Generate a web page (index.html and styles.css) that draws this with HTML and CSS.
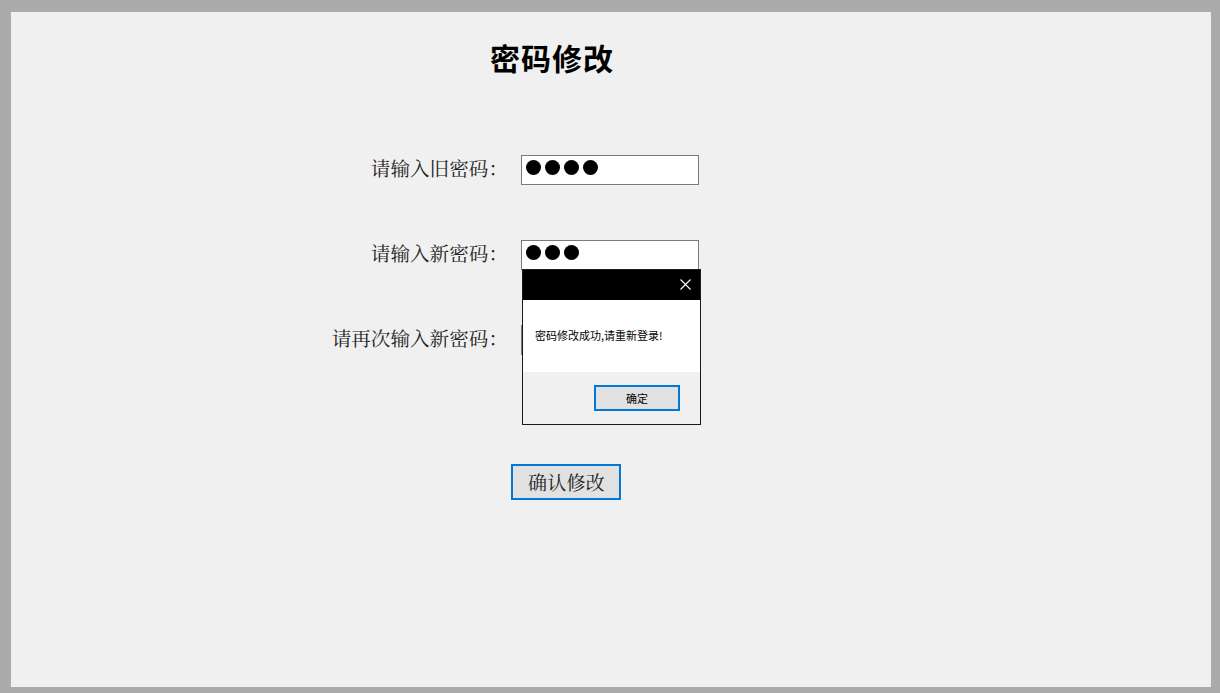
FILE: index.html
```html
<!DOCTYPE html>
<html lang="zh-CN">
<head>
<meta charset="utf-8">
<title>密码修改</title>
<link rel="stylesheet" href="styles.css">
</head>
<body>
<div class="frame">
  <h1 class="title">密码修改</h1>
  <div class="form">
    <label class="label">请输入旧密码：</label>
    <div class="field"><span class="dot"></span><span class="dot"></span><span class="dot"></span><span class="dot"></span></div>
    <label class="label">请输入新密码：</label>
    <div class="field"><span class="dot"></span><span class="dot"></span><span class="dot"></span></div>
    <label class="label">请再次输入新密码：</label>
    <div class="field"></div>
  </div>
  <div class="actions">
    <button class="btn-submit" type="button">确认修改</button>
  </div>

  <div class="dialog">
    <div class="dialog-bar">
      <svg class="close" width="11" height="11" viewBox="0 0 11 11"><path d="M0.5 0.5 L10.5 10.5 M10.5 0.5 L0.5 10.5" stroke="#fff" stroke-width="1.1" fill="none"/></svg>
    </div>
    <div class="dialog-body">密码修改成功,请重新登录!</div>
    <div class="dialog-foot">
      <button class="btn-ok" type="button">确定</button>
    </div>
  </div>
</div>
</body>
</html>
```

FILE: styles.css
```css
* { box-sizing: border-box; }
html, body { margin: 0; padding: 0; }
body {
  width: 1220px;
  height: 693px;
  background: #ababab;
  font-family: "Noto Sans CJK SC", sans-serif;
}
.frame {
  position: relative;
  width: 1220px;
  height: 693px;
  border-style: solid;
  border-color: #ababab;
  border-width: 12px 9px 6px 11px;
  background: #f0f0f0;
  padding-top: 27px;
}
.title {
  margin: 0;
  padding-left: 479px;
  font-size: 30px;
  line-height: 36px;
  height: 36px;
  font-weight: 700;
  color: #000;
  letter-spacing: 1px;
}
.form {
  margin-top: 80px;
  display: grid;
  grid-template-columns: 489px 178px;
  column-gap: 21px;
  row-gap: 55px;
  align-items: center;
}
.label {
  text-align: right;
  font-family: "Noto Serif CJK SC", "Noto Sans CJK SC", serif;
  font-size: 19.6px;
  font-weight: 400;
  color: #222;
  line-height: 30px;
  margin-top: -5px;
  margin-right: -8px;
  white-space: nowrap;
}
.field {
  height: 30px;
  background: #fff;
  border: 1px solid #7a7a7a;
  display: flex;
  align-items: center;
  gap: 4px;
  padding-left: 4px;
  padding-bottom: 5px;
}
.dot {
  width: 15px;
  height: 15px;
  border-radius: 50%;
  background: #000;
}
.actions {
  margin-top: 109px;
  padding-left: 500px;
}
.btn-submit {
  width: 110px;
  height: 36px;
  border: 2px solid #0078d7;
  background: #e1e1e1;
  font-family: "Noto Serif CJK SC", "Noto Sans CJK SC", serif;
  font-size: 19px;
  color: #222;
  padding: 0 0 0 1px;
  line-height: 30px;
  letter-spacing: 0.3px;
}
.dialog {
  position: absolute;
  left: 511px;
  top: 257px;
  width: 179px;
  height: 156px;
  border: 1px solid #1a1a1a;
  background: #f0f0f0;
  display: flex;
  flex-direction: column;
}
.dialog-bar {
  height: 30px;
  background: #000;
  display: flex;
  justify-content: flex-end;
  align-items: center;
  padding-right: 9px;
  padding-bottom: 2px;
}
.close { display: block; }
.dialog-body {
  height: 72px;
  background: #fff;
  font-size: 11px;
  color: #000;
  padding-left: 12px;
  padding-top: 28px;
  line-height: 15px;
  white-space: nowrap;
}
.dialog-foot {
  flex: 1;
  display: flex;
  justify-content: flex-end;
  padding-right: 20px;
  padding-top: 13px;
}
.btn-ok {
  width: 86px;
  height: 26px;
  border: 2px solid #0078d7;
  background: #e1e1e1;
  font-family: "Noto Sans CJK SC", sans-serif;
  font-size: 11px;
  color: #000;
  padding: 0;
}
```
